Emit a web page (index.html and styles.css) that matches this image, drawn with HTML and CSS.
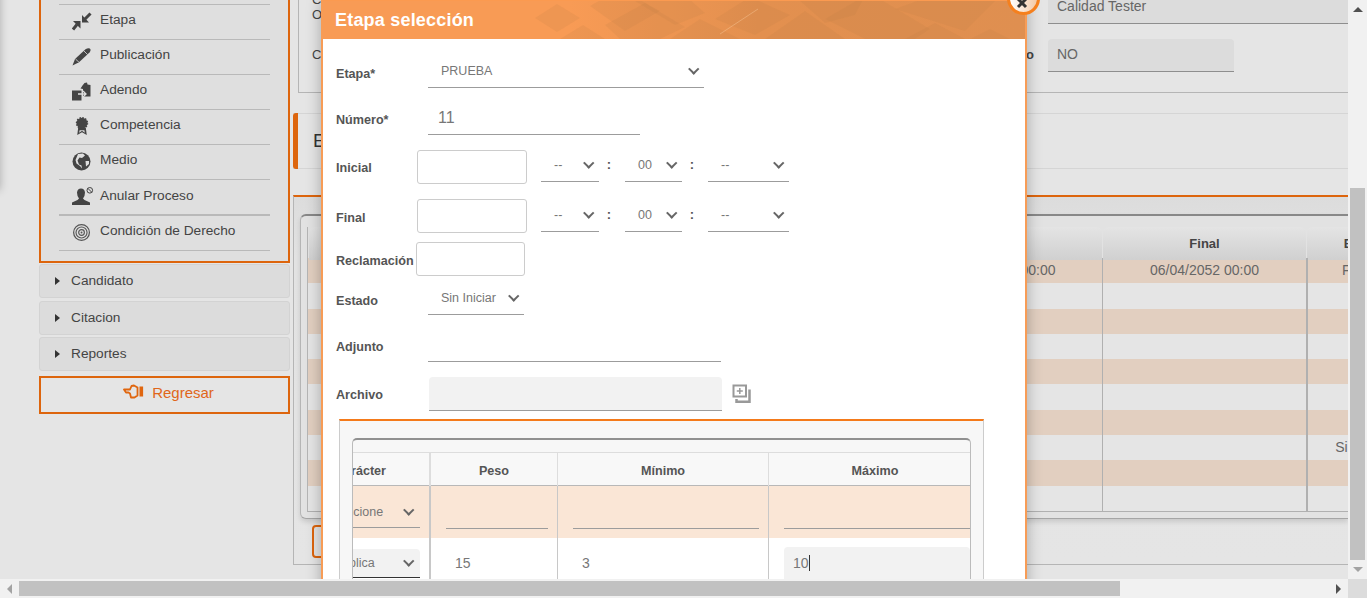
FILE: index.html
```html
<!DOCTYPE html>
<html lang="es">
<head>
<meta charset="utf-8">
<title>Etapa selección</title>
<link rel="stylesheet" href="styles.css">
</head>
<body>
<div class="top">
  <div class="page">
    <div class="edge-shadow"></div>
    <aside class="sidebar">
      <nav class="menu">
        <div class="menu-item"></div>
        <div class="menu-item">
          <svg class="mi" viewBox="0 0 20 18"><path fill="#444" d="M10 10V2.500L17 10zM8.500 8.500H1L8.500 16z"/><path stroke="#444" stroke-width="3" d="M13 6.500 18.500 1M5 12 1 17"/></svg>
          <span>Etapa</span>
        </div>
        <div class="menu-item">
          <svg class="mi" viewBox="0 0 20 18"><path fill="#444" d="M0.500 18 3 11.500 13.500 1.800Q16 0 17.800 1 19.500 2.500 17.500 5L7 14.800z"/><path stroke="#dfdfdf" stroke-width=".8" fill="none" d="M3.500 11.500 7 14.800M12 3.500 15.500 7"/></svg>
          <span>Publicación</span>
        </div>
        <div class="menu-item">
          <svg class="mi" viewBox="0 0 20 18"><path fill="#444" d="M0 8H9.500V18H0zM8.500 6 10.500 3 12.500 .5 15 0 15.500 2 18.500 2.500V14H11V6.500z"/><path stroke="#dfdfdf" stroke-width="1.300" fill="none" d="M6 11.500H13.500M11 8.500 14 11.500 11 14.500"/></svg>
          <span>Adendo</span>
        </div>
        <div class="menu-item">
          <svg class="mi" viewBox="0 0 20 20"><path fill="#444" d="M6 11 5 19 10 16 15 19 14 11z"/><path fill="#dfdfdf" d="M7.500 14 7 16.500 10 14.500 13 16.500 12.500 14z"/><circle cx="10" cy="6.500" r="5.800" fill="#444" stroke="#444" stroke-width="1.500" stroke-dasharray="1.500 1.500"/></svg>
          <span>Competencia</span>
        </div>
        <div class="menu-item">
          <svg class="mi" viewBox="0 0 20 18"><circle cx="9.500" cy="9" r="9" fill="#444"/><path fill="#dfdfdf" d="M6 1.500 11 1 13 3 10 5.500 7.500 5 5.500 8 7 12 9.500 13 10 16 8 13.500 4.500 11 3.500 7.500zM13.500 8.500 17 8.500 17 11.500 14 14z"/></svg>
          <span>Medio</span>
        </div>
        <div class="menu-item item-wide">
          <svg class="mi mi-wide" viewBox="0 0 22 19"><path fill="#444" d="M0 18V15.500L5.500 13 7 11.500Q5 9 5 5.500 5.500 1.500 9 1.500 12.500 1.500 13 5.500 13 9 11 11.500L12.500 13 18 15.500V18z"/><circle cx="17.800" cy="3.300" r="2.800" fill="#dfdfdf" stroke="#444" stroke-width="1"/><path stroke="#444" d="M15.800 1.300 19.800 5.300"/></svg>
          <span>Anular Proceso</span>
        </div>
        <div class="menu-item">
          <svg class="mi" viewBox="0 0 20 20"><g fill="none" stroke="#555"><circle cx="9.500" cy="10" r="8.300" stroke-width="1.300"/><circle cx="9.500" cy="10" r="5.800" stroke-width="1.200"/><circle cx="9.500" cy="10" r="3" stroke-width="1.200"/></g><circle cx="9.500" cy="10" r="1" fill="#555"/></svg>
          <span>Condición de Derecho</span>
        </div>
      </nav>
      <div class="acc acc-a"><i class="tri"></i>Candidato</div>
      <div class="acc acc-b"><i class="tri"></i>Citacion</div>
      <div class="acc acc-c"><i class="tri"></i>Reportes</div>
      <a class="back">
        <svg class="back-icon" viewBox="0 0 21 15"><path fill="none" stroke="#e0660f" stroke-width="1.800" stroke-linejoin="round" d="M1 5.500H7L8.500 2 11 1.500 14.500 3.500V11.500L11.500 13.500H8L7 9.500 5.500 8.500H3z"/><rect x="16.500" y="2.500" width="3.600" height="10" fill="#e0660f"/></svg>
        <span>Regresar</span>
      </a>
    </aside>

    <main class="main">
      <section class="panel-info">
        <div class="info-row info-row-a">
          <div class="info-label"><b>C</b><b>Obj.</b></div>
          <div class="ro ro-wide">Calidad Tester</div>
        </div>
        <div class="info-row info-row-b">
          <div class="info-label info-label-split"><b>Cierre</b><b>Público</b></div>
          <div class="ro ro-short">NO</div>
        </div>
      </section>
      <div class="tabband"><i class="tabmark"></i><span>Etapas</span></div>
      <section class="panel-list">
        <div class="list-box">
          <div class="grid-wrap">
            <div class="grow ghead">
              <div>Código</div><div>Inicial</div><div>Final</div><div>Estado</div>
            </div>
            <div class="grow peach"><div></div><div>01/04/2052 00:00</div><div>06/04/2052 00:00</div><div>Finalizó</div></div>
            <div class="grow"><div></div><div></div><div></div><div></div></div>
            <div class="grow peach"><div></div><div></div><div></div><div></div></div>
            <div class="grow"><div></div><div></div><div></div><div></div></div>
            <div class="grow peach"><div></div><div></div><div></div><div></div></div>
            <div class="grow"><div></div><div></div><div></div><div></div></div>
            <div class="grow peach"><div></div><div></div><div></div><div></div></div>
            <div class="grow"><div></div><div></div><div></div><div>Sin Iniciar</div></div>
            <div class="grow peach"><div></div><div></div><div></div><div></div></div>
            <div class="grow"><div></div><div></div><div></div><div></div></div>
          </div>
        </div>
        <div class="add-btn">Agregar</div>
      </section>
    </main>

    <div class="modal">
      <header class="modal-head">
        <svg class="pattern" viewBox="0 0 490 38" preserveAspectRatio="none">
          <g fill="#b87a45" fill-opacity=".16">
            <path d="M0 17 22 3 45 17 22 31z"/>
            <path d="M25 38 48 24 70 38z"/>
            <path d="M55 5 85 -12 125 10 90 30z"/>
            <path d="M70 24 110 2 150 26 125 38H85z"/>
            <path d="M100 0 145 -10 170 12 140 24z"/>
            <path d="M135 38 165 18 205 38z"/>
            <path d="M180 18 215 -4 255 14 220 34z"/>
            <path d="M230 38 270 10 310 38z"/>
            <path d="M265 0 330 -5 320 14 290 22z"/>
            <path d="M290 18 335 -8 395 28 380 38H330z"/>
            <path d="M360 8 410 -10 470 -10 430 30z"/>
            <path d="M370 38 400 22 430 38z"/>
            <path d="M435 38 455 28 475 38z"/>
          </g>
          <path d="M185 33 223 8" stroke="#ffd9ae" stroke-opacity=".35" fill="none"/>
        </svg>
        <h1 class="modal-title">Etapa selección</h1>
      </header>
      <button class="close" type="button"><svg viewBox="0 0 12 12"><path d="M2 2 10 10M10 2 2 10" stroke="#333" stroke-width="3"/></svg></button>
      <div class="modal-body">
        <div class="frow frow-low">
          <label class="flabel">Etapa*</label>
          <div class="sel sel-etapa"><span>PRUEBA</span><i class="chev"></i></div>
        </div>
        <div class="frow">
          <label class="flabel">Número*</label>
          <div class="txt txt-num">11</div>
        </div>
        <div class="frow frow-date">
          <label class="flabel flabel-date">Inicial</label>
          <div class="box"></div>
          <div class="sel sel-h"><span>--</span><i class="chev"></i></div>
          <b class="colon">:</b>
          <div class="sel sel-m"><span>00</span><i class="chev"></i></div>
          <b class="colon">:</b>
          <div class="sel sel-s"><span>--</span><i class="chev"></i></div>
        </div>
        <div class="frow frow-date frow-final">
          <label class="flabel flabel-date">Final</label>
          <div class="box"></div>
          <div class="sel sel-h"><span>--</span><i class="chev"></i></div>
          <b class="colon">:</b>
          <div class="sel sel-m"><span>00</span><i class="chev"></i></div>
          <b class="colon">:</b>
          <div class="sel sel-s"><span>--</span><i class="chev"></i></div>
        </div>
        <div class="frow frow-recl frow-low">
          <label class="flabel flabel-recl">Reclamación</label>
          <div class="box box-recl"></div>
        </div>
        <div class="frow frow-low">
          <label class="flabel">Estado</label>
          <div class="sel sel-estado"><span>Sin Iniciar</span><i class="chev"></i></div>
        </div>
        <div class="frow">
          <label class="flabel">Adjunto</label>
          <div class="txt txt-adj"></div>
        </div>
        <div class="frow">
          <label class="flabel">Archivo</label>
          <div class="filled"></div>
          <svg class="file-icon" viewBox="0 0 20 20"><path fill="none" stroke="#999" stroke-width="2" d="M1.500 1.500H14V12.500H1.500z"/><path stroke="#999" stroke-width="1.500" d="M7.800 4V10M4.800 7H10.800"/><path fill="none" stroke="#999" stroke-width="2.500" d="M17.500 5.500V17.800H4.500V15"/></svg>
        </div>
        <section class="crit">
          <div class="crit-box">
            <div class="crow chead">
              <div class="cell-first">Carácter</div><div>Peso</div><div>Mínimo</div><div class="head-max">Máximo</div>
            </div>
            <div class="crow cpeach">
              <div class="ccell cfirst"><div class="csel"><span>Seleccione</span><i class="chev"></i></div></div>
              <div class="ccell cpad"><div class="cinput"></div></div>
              <div class="ccell cpad"><div class="cinput"></div></div>
              <div class="ccell cpad clast"><div class="cinput"></div></div>
            </div>
            <div class="crow">
              <div class="ccell cfirst"><div class="csel csel-on"><span>No Aplica</span><i class="chev"></i></div></div>
              <div class="ccell cpad"><div class="cval">15</div></div>
              <div class="ccell cpad"><div class="cval">3</div></div>
              <div class="ccell cpad clast"><div class="cval cval-on">10<i class="caret"></i></div></div>
            </div>
          </div>
        </section>
      </div>
    </div>
  </div>
  <div class="vscroll">
    <div class="sb-cell"><i class="arr arr-up"></i></div>
    <div class="vthumb"></div>
    <div class="sb-cell sb-end"><i class="arr arr-down"></i></div>
  </div>
</div>
<div class="hscroll">
  <div class="sb-cell"><i class="arr arr-left"></i></div>
  <div class="hthumb"></div>
  <div class="sb-cell sb-end-h"><i class="arr arr-right"></i></div>
  <div class="corner"></div>
</div>
</body>
</html>
```

FILE: styles.css
```css
* { box-sizing: border-box; }
html, body { margin: 0; height: 100%; overflow: hidden; }
body {
  display: flex;
  flex-direction: column;
  font-family: "Liberation Sans", Arial, sans-serif;
  font-size: 14px;
  color: #444;
  background: #e5e5e5;
}
.top { display: flex; height: 579px; flex: none; }
.page {
  position: relative;
  display: flex;
  align-items: flex-start;
  width: 1348px;
  height: 579px;
  overflow: hidden;
  background: #e5e5e5;
}
.edge-shadow {
  position: absolute;
  left: -20px;
  top: -10px;
  width: 20px;
  height: 200px;
  box-shadow: 0 0 8px rgba(0, 0, 0, .25);
}

/* sidebar */
.sidebar { flex: none; width: 251px; margin: -33px 0 0 39px; }
.menu {
  border: 2px solid #dd650d;
  padding: 0 18px 10px;
  background: #dfdfdf;
  height: 296px;
}
.menu-item {
  display: flex;
  align-items: flex-start;
  height: 35px;
  padding: 7px 0 0 13px;
  border-bottom: 1px solid #b9b9b9;
  font-size: 13.7px;
  line-height: 16px;
  color: #444;
}
.menu-item:first-child { height: 36px; }
.item-wide { height: 36px; padding-top: 8px; border-bottom-width: 2px; }
.mi { flex: none; width: 20px; height: 19px; margin: 0 8px 0 0; }
.mi-wide { width: 22px; margin: -1px 6px 0 0; }
.acc {
  display: flex;
  align-items: center;
  height: 34px;
  padding-left: 15px;
  padding-bottom: 2px;
  background: #dcdcdc;
  border: 1px solid #d3d3d3;
  border-radius: 3px;
  font-size: 13.7px;
  color: #444;
}
.acc-a { margin-top: 1px; }
.acc-b { margin-top: 3px; }
.acc-c { margin-top: 2px; }
.tri {
  flex: none;
  width: 0;
  height: 0;
  margin: 2px 11px 0 0;
  border-left: 5px solid #333;
  border-top: 4px solid transparent;
  border-bottom: 4px solid transparent;
}
.back {
  display: flex;
  justify-content: center;
  align-items: center;
  gap: 8px;
  height: 38px;
  margin-top: 5px;
  padding: 0 0 5px 8px;
  border: 2px solid #dd650d;
  font-size: 15px;
  color: #e0661a;
}
.back-icon { width: 21px; height: 15px; margin-bottom: 3px; }

/* main */
.main { flex: none; width: 1055px; margin-left: 3px; }
.panel-info {
  height: 93px;
  margin-left: 5px;
  padding-left: 13px;
  border-left: 1px solid #b5b5b5;
  border-bottom: 1px solid #b5b5b5;
}
.info-row { display: flex; }
.info-row-a { height: 24px; margin-bottom: 15px; }
.info-label { flex: none; width: 736px; font-size: 13px; color: #444; }
.info-label b { display: block; line-height: 15px; }
.info-row-a .info-label { margin-top: -8px; }
.info-label-split { display: flex; justify-content: space-between; padding: 8px 14px 0 0; }
.info-row-b .info-label b:first-child { font-weight: 400; }
.info-row-a .info-label b { font-weight: 400; }
.ro {
  flex: none;
  display: flex;
  align-items: center;
  padding: 0 0 2px 9px;
  background: #dcdcdc;
  border-bottom: 1px solid #8e8e8e;
  border-radius: 4px 4px 0 0;
  color: #666;
}
.ro-wide { width: 302px; height: 34px; margin-top: -10px; }
.ro-short { width: 186px; height: 33px; }
.tabband {
  display: flex;
  align-items: center;
  height: 56px;
  margin-top: 20px;
  border-top: 1px solid #d5d5d5;
  border-bottom: 1px solid #d5d5d5;
  font-size: 19px;
  color: #333;
}
.tabmark {
  align-self: stretch;
  width: 5px;
  margin: -1px 15px -1px 0;
  background: #dd650d;
  border-radius: 3px 0 0 3px;
}
.panel-list {
  height: 370px;
  margin-top: 26px;
  padding: 17px 0 0 6px;
  border-top: 2px solid #dd650d;
  border-left: 1px solid #b5b5b5;
  border-bottom: 1px solid #b5b5b5;
  background: linear-gradient(#dcdcdc 0, #e3e3e3 60px, #e5e5e5 100%);
}
.list-box {
  padding: 11px 0 6px 6px;
  border-top: 2px solid #888;
  border-left: 1px solid #b5b5b5;
  border-bottom: 1px solid #a5a5a5;
  border-radius: 6px 0 0 6px;
  background: #e2e2e2;
  box-shadow: 0 3px 5px rgba(0, 0, 0, .12);
}
.grid-wrap {
  border-left: 1px solid #b5b5b5;
  border-bottom: 1px solid #b0b0b0;
  background: #e5e5e5;
  overflow: hidden;
}
.grow {
  display: grid;
  grid-template-columns: 592px 202px 204px 122px;
  height: 25.3px;
  line-height: 25px;
  text-align: center;
  color: #666;
  background: #e5e5e5;
}
.grow > div { white-space: nowrap; }
.grow > div + div + div { border-left: 1px solid #b0b0b0; }
.grow > div + div + div + div { border-left-width: 2px; padding-right: 4px; }
.peach { background: #e2cfc0; }
.ghead { height: 31px; line-height: 33px; font-size: 13px; font-weight: 700; color: #444; background: #e2e2e2; }
.ghead > div,
.ghead > div + div + div,
.ghead > div + div + div + div {
  margin-left: 1px;
  border: 0;
  border-radius: 5px 5px 0 0;
  background: linear-gradient(#e4e4e4, #d0d0d0);
}
.add-btn {
  width: 120px;
  height: 33px;
  margin: 6px 0 0 12px;
  border: 2px solid #dd650d;
  border-radius: 4px;
  text-align: center;
  line-height: 29px;
  color: #dd650d;
}

/* modal */
.modal {
  position: absolute;
  left: 321px;
  top: 0;
  width: 706px;
  height: 760px;
  border: solid #f79c56;
  border-width: 0 2px;
  background: #fff;
  box-shadow: 0 0 14px rgba(0, 0, 0, .28);
}
.modal-head {
  position: relative;
  height: 39px;
  background: linear-gradient(90deg, #f89b55 0, #f89b55 35%, #e3904f 62%, #df8f50 100%);
  border-top: 1px solid #fb9a50;
}
.pattern { position: absolute; right: 0; top: 0; width: 490px; height: 38px; }
.modal-title {
  position: relative;
  margin: 0;
  padding-left: 12px;
  font-size: 18px;
  line-height: 38px;
  letter-spacing: .2px;
  font-weight: 700;
  color: #fff;
}
.close {
  position: absolute;
  left: 684px;
  top: -18px;
  width: 33px;
  height: 33px;
  padding: 0;
  border: 3px solid #f5801e;
  border-radius: 50%;
  background: linear-gradient(90deg, #fff, #f3c9a6);
  display: flex;
  align-items: flex-end;
  justify-content: center;
}
.close svg { width: 12px; height: 12px; margin-bottom: 3px; margin-right: 4px; }
.modal-body { padding: 17px 0 0 13px; }
.frow { display: flex; align-items: center; margin-bottom: 15px; }
.frow-date { align-items: flex-start; }
.frow-final { margin-bottom: 9px; }
.frow-recl { margin-bottom: 7px; }
.flabel {
  flex: none;
  width: 92px;
  padding-top: 1px;
  font-size: 12.6px;
  font-weight: 700;
  color: #555;
}
.frow-low .flabel { padding-top: 3px; }
.flabel-date { width: 81px; height: 34px; line-height: 36px; padding-top: 0; }
.frow-final .flabel-date { line-height: 38px; }
.frow-final .sel, .frow-final .colon { margin-top: 1px; }
.frow-recl .flabel-recl { width: 80px; }
.sel {
  position: relative;
  display: flex;
  align-items: center;
  justify-content: space-between;
  flex: none;
  height: 32px;
  padding: 0 5px 2px 13px;
  border-bottom: 1px solid #9c9c9c;
  font-size: 12.5px;
  color: #777;
}
.sel-etapa { width: 276px; }
.sel-h { width: 58px; margin-left: 14px; }
.sel-m { width: 57px; }
.sel-s { width: 81px; }
.sel-estado { width: 96px; }
.chev {
  flex: none;
  width: 7.500px;
  height: 7.500px;
  margin: -4px 1.500px 0 0;
  border-right: 2px solid #666;
  border-bottom: 2px solid #666;
  transform: rotate(45deg);
}
.colon {
  flex: none;
  width: 26px;
  height: 32px;
  padding-right: 6px;
  text-align: center;
  line-height: 30px;
  font-size: 13px;
  color: #555;
}
.txt {
  flex: none;
  height: 32px;
  padding: 0 10px 2px;
  border-bottom: 1px solid #9c9c9c;
  line-height: 30px;
  font-size: 16px;
  color: #777;
}
.txt-num { width: 212px; }
.txt-adj { width: 293px; }
.box {
  flex: none;
  width: 110px;
  height: 34px;
  background: #fff;
  border: 1px solid #ccc;
  border-radius: 3px;
}
.box-recl { width: 109px; }
.filled {
  flex: none;
  width: 293px;
  height: 34px;
  margin-left: 1px;
  background: #f2f2f2;
  border-bottom: 1px solid #9c9c9c;
  border-radius: 4px 4px 0 0;
}
.file-icon { flex: none; width: 20px; height: 20px; margin-left: 10px; }

/* criteria table */
.crit {
  width: 645px;
  height: 300px;
  margin: -7px 0 0 3px;
  padding: 17px 0 0 12px;
  background: #f7f7f7;
  border-top: 2px solid #f47a1a;
  border-left: 1px solid #ccc;
  border-right: 1px solid #ccc;
}
.crit-box {
  width: 619px;
  padding-top: 12px;
  border-top: 2px solid #909090;
  border-left: 1px solid #bbb;
  border-right: 1px solid #bbb;
  border-radius: 5px 5px 0 0;
  background: #f7f7f7;
}
.crow {
  display: grid;
  grid-template-columns: 76px 128px 211px 202px;
  height: 52px;
  background: #fff;
}
.crow > div { border-left: 1px solid #c8c8c8; min-width: 0; }
.crow > div:first-child { border-left: 0; }
.crow > div:nth-child(2) { border-left-width: 2px; }
.chead {
  height: 34px;
  border-top: 1px solid #ddd;
  border-bottom: 1px solid #b8b8b8;
  background: #f8f8f8;
  font-size: 12.6px;
  font-weight: 700;
  line-height: 36px;
  text-align: center;
  color: #555;
}
.chead > div { border-left-color: #ddd; }
.chead .head-max { padding-left: 11px; }
.cell-first { display: flex; justify-content: flex-end; padding-right: 43px; overflow: hidden; }
.cpeach { background: #fae6d6; }
.ccell { display: flex; flex-direction: column; }
.cfirst { overflow: hidden; padding-right: 9px; }
.cpad { padding: 0 9px 0 15px; }
.cpad.clast { padding: 0 0 0 15px; }
.csel {
  display: flex;
  align-items: center;
  justify-content: space-between;
  height: 29px;
  margin-top: 11px;
  padding-right: 6px;
  border-bottom: 1px solid #9c9c9c;
  font-size: 12.5px;
  white-space: nowrap;
  color: #777;
}
.cpeach .csel { margin-top: 13px; padding-bottom: 2px; }
.csel-on { background: #f2f2f2; border-bottom-color: #333; border-radius: 0 4px 0 0; }
.csel span { flex: none; margin-left: -31px; }
.cinput { height: 43px; border-bottom: 1px solid #9c9c9c; }
.cval { height: 34px; margin-top: 9px; padding-left: 9px; line-height: 32px; font-size: 14px; color: #777; }
.cval-on { background: #f2f2f2; border-radius: 4px 4px 0 0; }
.caret { display: inline-block; width: 1.500px; height: 16px; vertical-align: -3px; background: #333; }

/* scrollbars */
.vscroll {
  display: flex;
  flex-direction: column;
  flex: none;
  width: 19px;
  height: 579px;
  background: #f1f1f1;
}
.sb-cell { display: flex; align-items: center; justify-content: center; flex: none; width: 19px; height: 19px; }
.sb-end { margin-top: auto; }
.vthumb { width: 15px; height: 372px; margin: 169px 0 0 2px; background: #c1c1c1; }
.hscroll { display: flex; align-items: center; flex: none; height: 19px; background: #f1f1f1; }
.hthumb { flex: none; width: 1101px; height: 15px; background: #c1c1c1; }
.sb-end-h { margin-left: auto; }
.corner { flex: none; width: 19px; height: 19px; background: #dcdcdc; }
.arr { width: 0; height: 0; border: 0 solid transparent; }
.arr-up { border-width: 0 5px 5px; border-bottom-color: #505050; }
.arr-down { border-width: 5px 5px 0; border-top-color: #a3a3a3; }
.arr-left { border-width: 5px 5px 5px 0; border-right-color: #a3a3a3; }
.arr-right { border-width: 5px 0 5px 5px; border-left-color: #505050; }
```
